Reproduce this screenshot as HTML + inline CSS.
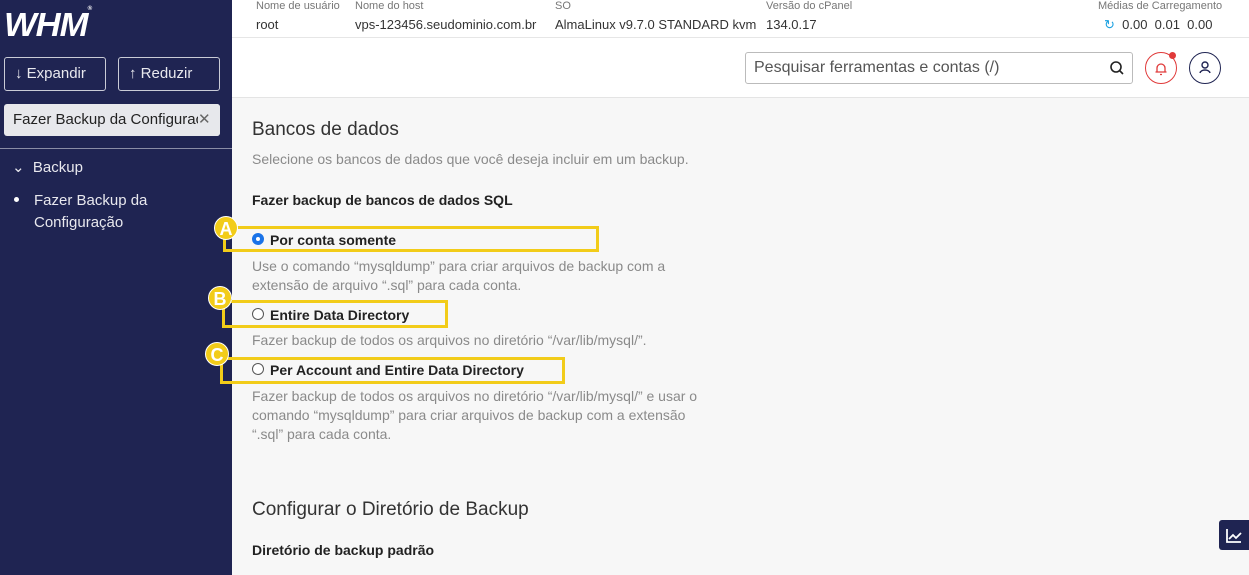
<!DOCTYPE html><html><head><meta charset="utf-8"><style>
*{margin:0;padding:0;box-sizing:border-box}
body{width:1249px;height:575px;overflow:hidden;font-family:"Liberation Sans",sans-serif;background:#f7f7f7;position:relative;color:#333}
.sb{position:absolute;left:0;top:0;width:232px;height:575px;background:#1f2452;color:#fff}
.a{position:absolute}
.btn{position:absolute;border:1px solid #c9cbd6;border-radius:3px;height:34px;top:57px;color:#e8e8ee;font-size:15px;line-height:32px;padding-left:10px}
.hdr{position:absolute;left:232px;top:0;right:0;height:98px;background:#fff;border-bottom:1px solid #e4e4e4}
.lbl{font-size:11px;color:#777;position:absolute;top:0}
.val{font-size:13px;color:#333;position:absolute;top:17px}
.g{color:#8a8a8a;font-size:14px}
.box{position:absolute;border:3px solid #f2cc19}
.bd{position:absolute;width:24px;height:24px;border-radius:50%;background:#f2cc19;color:#fff;font-weight:bold;font-size:18px;text-align:center;line-height:24px;border:1px solid #fff}
.rad{position:absolute;width:12px;height:12px;border:1px solid #555;border-radius:50%;background:#fff}
.bt{position:absolute;font-size:14px;font-weight:bold;color:#222}
</style></head><body>
<div class="sb">
<div class="a" style="left:4px;top:6px;font-size:33px;font-weight:bold;font-style:italic;letter-spacing:-1px;transform:scaleX(1.05);transform-origin:left">WHM<span style="font-size:6px;vertical-align:top">®</span></div>
<div class="btn" style="left:4px;width:102px">↓ Expandir</div>
<div class="btn" style="left:118px;width:102px">↑ Reduzir</div>
<div class="a" style="left:4px;top:104px;width:216px;height:32px;background:#e7e8ec;border-radius:3px;color:#222;font-size:15px;line-height:32px;padding-left:9px;white-space:nowrap;overflow:hidden">Fazer Backup da Configurac<span style="position:absolute;right:0;width:22px;background:#e7e8ec;color:#666">✕</span></div>
<div class="a" style="left:0;top:148px;width:232px;height:1px;background:#8a8da6"></div>
<div class="a" style="left:12px;top:158px;font-size:15px;color:#e8e8ee">⌄&nbsp; Backup</div>
<div class="a" style="left:14px;top:197px;width:5px;height:5px;border-radius:50%;background:#fff"></div>
<div class="a" style="left:34px;top:190px;font-size:15px;line-height:22px;color:#e8e8ee">Fazer Backup da<br>Configuração</div>
</div>
<div class="hdr">
<div class="lbl" style="left:24px">Nome de usuário</div><div class="val" style="left:24px">root</div>
<div class="lbl" style="left:123px">Nome do host</div><div class="val" style="left:123px">vps-123456.seudominio.com.br</div>
<div class="lbl" style="left:323px">SO</div><div class="val" style="left:323px">AlmaLinux v9.7.0 STANDARD kvm</div>
<div class="lbl" style="left:534px">Versão do cPanel</div><div class="val" style="left:534px">134.0.17</div>
<div class="lbl" style="left:866px">Médias de Carregamento</div><div class="val" style="left:872px"><span style="color:#1aa0e0">↻</span>&nbsp; 0.00&nbsp; 0.01&nbsp; 0.00</div>
<div class="a" style="left:0;top:37px;right:0;height:1px;background:#e6e6e6"></div>
<div class="a" style="left:513px;top:52px;width:388px;height:32px;border:1px solid #bbb;border-radius:3px;font-size:16px;color:#555;line-height:30px;padding-left:8px">Pesquisar ferramentas e contas (/)<svg style="position:absolute;right:8px;top:8px" width="14" height="14" viewBox="0 0 14 14"><circle cx="6" cy="6" r="5" fill="none" stroke="#222" stroke-width="1.6"/><path d="M10 10l3 3" stroke="#222" stroke-width="1.6"/></svg></div>
<div class="a" style="left:913px;top:52px;width:32px;height:32px;border:1px solid #e03a3a;border-radius:50%"><svg width="30" height="30" viewBox="0 0 30 30"><path d="M11 19v-4a4 4 0 0 1 8 0v4zM9.5 19h11M14 21.5h2" fill="none" stroke="#e03a3a" stroke-width="1.3"/></svg></div>
<div class="a" style="left:937px;top:52px;width:7px;height:7px;border-radius:50%;background:#e03a3a"></div>
<div class="a" style="left:957px;top:52px;width:32px;height:32px;border:1px solid #1f2452;border-radius:50%"><svg width="30" height="30" viewBox="0 0 30 30"><circle cx="15" cy="12" r="3" fill="none" stroke="#1f2452" stroke-width="1.4"/><path d="M10 20c1-4 9-4 10 0" fill="none" stroke="#1f2452" stroke-width="1.4"/></svg></div>
</div>
<div class="a" style="left:252px;top:119px;font-size:19px;color:#333">Bancos de dados</div>
<div class="a g" style="left:252px;top:151px">Selecione os bancos de dados que você deseja incluir em um backup.</div>
<div class="bt" style="left:252px;top:192px">Fazer backup de bancos de dados SQL</div>
<div class="box" style="left:223px;top:226px;width:376px;height:26px"></div>
<div class="rad" style="left:252px;top:233px;border:4px solid #1a73e8"></div>
<div class="bt" style="left:270px;top:232px">Por conta somente</div>
<div class="a g" style="left:252px;top:257px;line-height:19px">Use o comando “mysqldump” para criar arquivos de backup com a<br>extensão de arquivo “.sql” para cada conta.</div>
<div class="box" style="left:222px;top:300px;width:226px;height:28px"></div>
<div class="rad" style="left:252px;top:308px"></div>
<div class="bt" style="left:270px;top:307px">Entire Data Directory</div>
<div class="a g" style="left:252px;top:332px">Fazer backup de todos os arquivos no diretório “/var/lib/mysql/”.</div>
<div class="box" style="left:220px;top:357px;width:345px;height:27px"></div>
<div class="rad" style="left:252px;top:363px"></div>
<div class="bt" style="left:270px;top:362px">Per Account and Entire Data Directory</div>
<div class="a g" style="left:252px;top:387px;line-height:19px">Fazer backup de todos os arquivos no diretório “/var/lib/mysql/” e usar o<br>comando “mysqldump” para criar arquivos de backup com a extensão<br>“.sql” para cada conta.</div>
<div class="bd" style="left:214px;top:216px">A</div>
<div class="bd" style="left:208px;top:286px">B</div>
<div class="bd" style="left:205px;top:342px">C</div>
<div class="a" style="left:252px;top:499px;font-size:19px;color:#333">Configurar o Diretório de Backup</div>
<div class="bt" style="left:252px;top:542px">Diretório de backup padrão</div>
<div class="a" style="left:1219px;top:520px;width:30px;height:30px;background:#1f2452;border-radius:3px 0 0 3px"><svg width="30" height="30" viewBox="0 0 30 30"><path d="M8 9v13h14M10 19l4-4 3 3 5-5" fill="none" stroke="#fff" stroke-width="1.8"/></svg></div>
</body></html>
